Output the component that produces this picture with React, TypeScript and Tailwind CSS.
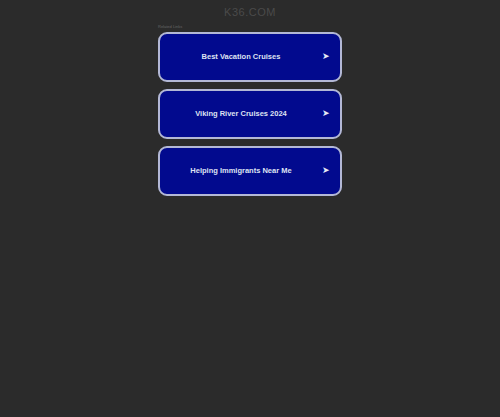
import React from "react";

const links = ["Best Vacation Cruises", "Viking River Cruises 2024", "Helping Immigrants Near Me"];

export default function App() {
  return (
    <div className="w-[500px] h-[417px] bg-[#2b2b2b] flex flex-col items-center" style={{ fontFamily: '"Liberation Sans", Arial, sans-serif' }}>
      <div className="mt-[5px] h-[15px] text-[11px] leading-[15px] text-[#4a4a4a] tracking-[0.5px]">K36.COM</div>
      <div className="w-[184px] mt-[4px] text-[4px] leading-[6px] text-[#666]">Related Links</div>
      <div className="w-[184px] flex flex-col gap-[7px] mt-[2px]">
        {links.map((t) => (
          <div key={t} className="h-[50px] rounded-[9px] border-2 border-[#b3b8d6] bg-[#020a8e] flex items-center pl-[14px] pr-[10px]">
            <div className="flex-1 text-center text-[7.5px] font-bold text-[#dfe2f2]">{t}</div>
            <div className="w-[22px] text-right text-[9px] text-[#e6e8f5]">➤</div>
          </div>
        ))}
      </div>
    </div>
  );
}
